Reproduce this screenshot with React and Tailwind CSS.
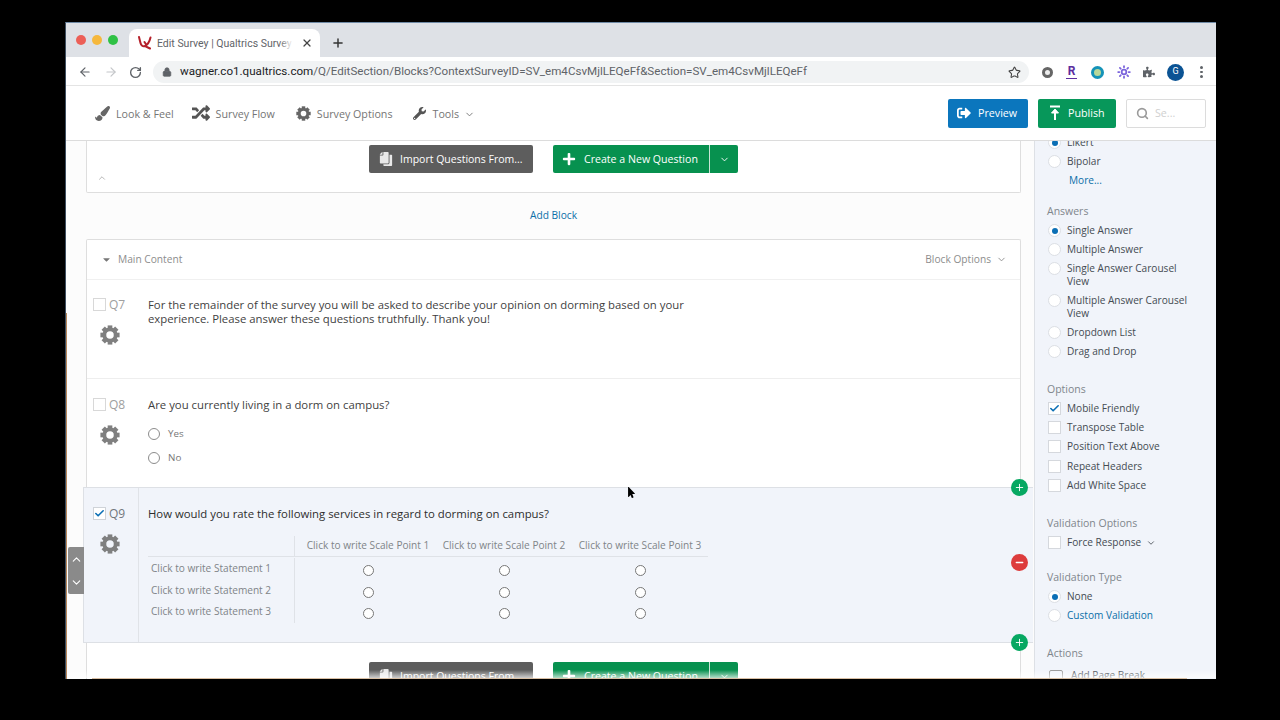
import React from 'react';
import { ArrowLeft, ArrowRight, RotateCw, Lock, Star, X, Plus, ChevronDown, ChevronUp, Search, Check, Minus, Sun } from 'lucide-react';
import { FaPaintBrush, FaWrench, FaPuzzlePiece, FaCopy, FaCaretDown, FaSignOutAlt, FaPlus, FaMousePointer, FaRandom } from 'react-icons/fa';

const font = "font-['Open_Sans',sans-serif]";

const CogIcon = ({ size, className }) => (
  <svg width={size} height={size} viewBox="0 0 24 24" className={className}>
    {[0, 45, 90, 135, 180, 225, 270, 315].map((a) => (
      <rect key={a} x="9.2" y="0.5" width="5.6" height="6" fill="currentColor" transform={`rotate(${a} 12 12)`} />
    ))}
    <circle cx="12" cy="12" r="6.8" fill="none" stroke="currentColor" strokeWidth="4.6" />
  </svg>
);

const Radio = ({ on }) => (
  <span className="w-[13px] h-[13px] shrink-0 rounded-full bg-white border border-[#dcdfe4] flex items-center justify-center">
    {on && <span className="w-[6px] h-[6px] rounded-full bg-[#0b6fb5]" />}
  </span>
);

const Box = ({ on }) => (
  <span className="w-[13px] h-[13px] shrink-0 bg-white border border-[#d5d8dd] flex items-center justify-center">
    {on && <Check size={11} strokeWidth={3.5} className="text-[#0b6fb5]" />}
  </span>
);

const Row = ({ children, mark, blue }) => (
  <div className="flex items-start gap-[6px] py-[3px] pl-[1px] leading-[13px]">
    <span className="flex">{mark}</span>
    <span className={`w-[124px] text-[10.1px] ${blue ? 'text-[#0b6fa8]' : 'text-[#444b52]'}`}>{children}</span>
  </div>
);

const Heading = ({ children }) => (
  <div className="h-[19px] leading-[19px] text-[10.5px] text-[#80868c]">{children}</div>
);

const Gear = () => <CogIcon size={20} className="text-[#7f7f7f] mt-[14px] ml-[7px]" />;

const QNum = ({ n, on }) => (
  <div className="flex items-center gap-[3px]">
    <span className={`w-[13px] h-[13px] border flex items-center justify-center ${on ? 'bg-white border-[#cfd3d8]' : 'border-[#d8d8d8]'}`}>
      {on && <Check size={11} strokeWidth={3.5} className="text-[#0b6fb5]" />}
    </span>
    <span className={`text-[12px] leading-[13px] ${on ? 'text-[#72777c]' : 'text-[#a0a0a0]'}`}>{n}</span>
  </div>
);

const ImportAndCreate = () => (
  <div className="flex justify-center gap-[20px]">
    <button className="w-[164px] h-[28px] bg-[#5d5d5d] rounded-[2px] flex items-center pl-[10px] gap-[7px] text-white text-[10.5px]">
      <FaCopy size={14} className="text-[#e8e8e8] -scale-x-100" />
      <span className="mt-[2px]">Import Questions From...</span>
    </button>
    <div className="flex h-[28px] bg-[#07914f] rounded-[2px] text-white">
      <button className="w-[156px] flex items-center pl-[9px] gap-[8px] text-[10.6px]">
        <FaPlus size={14} />
        <span className="mt-[2px]">Create a New Question</span>
      </button>
      <span className="w-[1px] bg-[#c9e6d6]" />
      <button className="w-[28px] flex items-center justify-center">
        <ChevronDown size={11} />
      </button>
    </div>
  </div>
);

const Circle = ({ className, children }) => (
  <span className={`absolute right-[5px] w-[17px] h-[17px] rounded-full flex items-center justify-center text-white z-10 ${className}`}>
    {children}
  </span>
);

const statements = ['Click to write Statement 1', 'Click to write Statement 2', 'Click to write Statement 3'];
const scale = ['Click to write Scale Point 1', 'Click to write Scale Point 2', 'Click to write Scale Point 3'];

export default function App() {
  return (
    <div className={`w-[1280px] h-[720px] bg-black overflow-hidden pt-[22px] pl-[65px] ${font}`}>
      <div className="relative w-[1151px] h-[657px] overflow-hidden flex flex-col bg-white border-t border-[#6f8aa6] border-l border-l-[#3f4f60]">
        {/* tab strip */}
        <div className="h-[34px] shrink-0 bg-[#dee1e6] flex items-end font-['Roboto',sans-serif]">
          <div className="flex gap-[6px] h-[34px] items-center pl-[10px] w-[63px] -mt-[1px] pb-[1px]">
            <span className="w-[10px] h-[10px] rounded-full bg-[#ec5f57]" />
            <span className="w-[10px] h-[10px] rounded-full bg-[#f6b83c]" />
            <span className="w-[10px] h-[10px] rounded-full bg-[#2fc145]" />
          </div>
          <div className="relative w-[191px] h-[28px] bg-white rounded-t-[8px] flex items-center pl-[9px] pr-[7px]">
            <svg width="14" height="14" viewBox="0 0 14 14" fill="none" className="shrink-0">
              <path d="M1 1 L2.5 7 Q3.5 11 7 10 L12 12.5 M7 10 Q11 8 12.5 1.5 M6.5 6 L8.5 9" stroke="#b5202a" strokeWidth="2" strokeLinecap="round" />
            </svg>
            <span className="ml-[5px] mt-[2px] w-[136px] overflow-hidden whitespace-nowrap text-[10.5px] text-[#5f6368]">Edit Survey | Qualtrics Survey S</span>
            <span className="absolute left-[150px] top-0 w-[14px] h-[28px] bg-gradient-to-r from-white/0 to-white" />
            <X size={12} strokeWidth={2.5} className="ml-auto text-[#444]" />
          </div>
          <div className="h-[28px] flex items-center ml-[11px]">
            <Plus size={14} strokeWidth={2.5} className="text-[#333]" />
          </div>
        </div>

        {/* toolbar */}
        <div className="h-[29px] shrink-0 bg-white flex items-center pt-[2px] border-b border-[#e4e4e4] font-['Roboto',sans-serif]">
          <ArrowLeft size={14} className="ml-[12px] text-[#5f6368]" />
          <ArrowRight size={14} className="ml-[12px] text-[#c4c6c9]" />
          <RotateCw size={13} strokeWidth={2.5} className="ml-[11px] text-[#5f6368]" />
          <div className="ml-[11px] w-[876px] h-[22px] rounded-full bg-[#f1f3f4] flex items-center pl-[9px] pr-[8px]">
            <Lock size={10} fill="#5f6368" className="text-[#5f6368]" />
            <span className="ml-[8px] text-[11.6px] text-[#202124]">wagner.co1.qualtrics.com</span>
            <span className="text-[11.6px] text-[#5f6368]">/Q/EditSection/Blocks?ContextSurveyID=SV_em4CsvMjlLEQeFf&Section=SV_em4CsvMjlLEQeFf</span>
            <Star size={13} className="ml-auto text-[#444]" />
          </div>
          <span className="ml-[13px] w-[11px] h-[11px] rounded-full border-[3px] border-[#666] bg-[#eee]" />
          <span className="ml-[13px] w-[11px] text-[12px] font-bold leading-[13px] text-[#5b2d9e] border-b border-[#5b2d9e] text-center">R</span>
          <span className="ml-[14px] w-[13px] h-[13px] rounded-full border-[3px] border-[#1593b8] bg-[#b8d89a]" />
          <Sun size={14} strokeWidth={3} className="ml-[13px] text-[#7a63dc]" />
          <FaPuzzlePiece size={12} className="ml-[12px] text-[#5f6368]" />
          <span className="ml-[12px] w-[17px] h-[17px] rounded-full bg-[#0b5394] text-white text-[9px] flex items-center justify-center">G</span>
          <span className="ml-[16px] flex flex-col gap-[2px]">
            <span className="w-[2.5px] h-[2.5px] rounded-full bg-[#5f6368]" />
            <span className="w-[2.5px] h-[2.5px] rounded-full bg-[#5f6368]" />
            <span className="w-[2.5px] h-[2.5px] rounded-full bg-[#5f6368]" />
          </span>
        </div>

        {/* app header */}
        <div className="h-[55px] shrink-0 bg-white border-b border-[#dcdcdc] flex items-center text-[10.7px] text-[#757575]">
          <FaPaintBrush size={15} className="ml-[29px] text-[#666]" />
          <span className="ml-[6px] mt-[2px]">Look &amp; Feel</span>
          <FaRandom size={18} className="ml-[18px] text-[#555]" />
          <span className="ml-[6px] mt-[2px]">Survey Flow</span>
          <CogIcon size={15} className="ml-[21px] text-[#666]" />
          <span className="ml-[6px] mt-[2px]">Survey Options</span>
          <FaWrench size={13} className="ml-[20px] text-[#555]" />
          <span className="ml-[7px] mt-[2px]">Tools</span>
          <ChevronDown size={11} className="ml-[5px] mt-[2px]" />
          <button className="ml-auto w-[80px] h-[29px] bg-[#0b76bd] rounded-[2px] text-white flex items-center pl-[9px] gap-[7px]">
            <FaSignOutAlt size={14} />
            Preview
          </button>
          <button className="ml-[10px] w-[78px] h-[29px] bg-[#07975a] rounded-[2px] text-white flex items-center pl-[11px] gap-[7px]">
            <svg width="12" height="16" viewBox="0 0 12 16" fill="none" stroke="white" strokeWidth="2">
              <path d="M1 1.5 H11 M6 15 V5" />
              <path d="M2.5 8 L6 4 L9.5 8 Z" fill="white" strokeWidth="1" />
            </svg>
            Publish
          </button>
          <div className="ml-[10px] mr-[10px] w-[80px] h-[29px] border border-[#dcdcdc] rounded-[2px] flex items-center pl-[9px] gap-[6px]">
            <Search size={13} strokeWidth={3} className="text-[#9a9a9a]" />
            <span className="text-[#d0d0d0]">Se...</span>
          </div>
        </div>

        <div className="flex-1 flex min-h-0">
          {/* survey canvas */}
          <div className="w-[968px] shrink-0 bg-[#fcfcfc] pl-[20px] overflow-hidden">
            <div className="w-[935px]">
              <div className="h-[52px] bg-white border border-t-0 border-[#dedede] rounded-b-[2px] pt-[4px]">
                <ImportAndCreate />
                <ChevronUp size={10} className="ml-[10px] text-[#aaa]" />
              </div>
              <div className="h-[46px] flex items-center justify-center text-[10.2px] text-[#0b6fa8]">Add Block</div>

              <div className="bg-white border border-[#dedede] border-b-0 rounded-t-[2px]">
                <div className="h-[40px] border-b border-[#f0f0f0] flex items-center text-[10.2px] text-[#8d8d8d] pl-[14px] pr-[13px]">
                  <FaCaretDown size={11} className="text-[#777]" />
                  <span className="ml-[6px]">Main Content</span>
                  <span className="ml-auto">Block Options</span>
                  <ChevronDown size={11} className="ml-[5px]" />
                </div>

                <div className="h-[99px] border-b border-[#eeeeee] flex pl-[6px] pt-[18px]">
                  <div className="w-[55px] shrink-0">
                    <QNum n="Q7" />
                    <Gear />
                  </div>
                  <p className="w-[540px] text-[11.35px] leading-[14px] text-[#3f3f3f]">
                    For the remainder of the survey you will be asked to describe your opinion on dorming based on your experience. Please answer these questions truthfully. Thank you!
                  </p>
                </div>

                <div className="h-[108px] flex pl-[6px] pt-[19px]">
                  <div className="w-[55px] shrink-0">
                    <QNum n="Q8" />
                    <Gear />
                  </div>
                  <div>
                    <p className="text-[11.35px] leading-[14px] text-[#3f3f3f]">Are you currently living in a dorm on campus?</p>
                    <div className="mt-[16px] flex flex-col gap-[12px] text-[9.8px] text-[#777] leading-[12px]">
                      <div className="flex items-center gap-[8px]">
                        <span className="w-[12px] h-[12px] rounded-full border border-[#8c8c8c]" />
                        Yes
                      </div>
                      <div className="flex items-center gap-[8px]">
                        <span className="w-[12px] h-[12px] rounded-full border border-[#8c8c8c]" />
                        No
                      </div>
                    </div>
                  </div>
                </div>

                {/* selected question */}
                <div className="relative h-[156px] -ml-[4px] -mr-[13px] bg-[#f1f4fa] border-y border-l border-[#dde0e5] flex">
                  <Circle className="-top-[9px] bg-[#07a862]"><Plus size={11} /></Circle>
                  <Circle className="top-[66px] bg-[#dd3c3c]"><Minus size={11} strokeWidth={3} /></Circle>
                  <Circle className="-bottom-[9px] bg-[#07a862]"><Plus size={11} /></Circle>
                  <div className="absolute -left-[16px] top-[59px] w-[16px] h-[47px] bg-[#8a8a8a] rounded-l-[2px] flex flex-col items-center justify-center gap-[10px] text-white">
                    <ChevronUp size={13} />
                    <ChevronDown size={13} />
                  </div>
                  <div className="w-[55px] shrink-0 border-r border-[#e0e3e8] pl-[9px] pt-[19px]">
                    <QNum n="Q9" on />
                    <Gear />
                  </div>
                  <div className="pl-[9px] pt-[19px]">
                    <p className="text-[11.35px] leading-[14px] text-[#2d2d2d]">How would you rate the following services in regard to dorming on campus?</p>
                    <div className="mt-[15px] w-[560px] text-[10.1px] text-[#808488]">
                      <div className="flex h-[21px] border-b border-[#dfe2e7]">
                        <div className="w-[147px] border-r border-[#dfe2e7]" />
                        <div className="pl-[5px] grid grid-cols-[136px_136px_136px] items-center text-center">
                          {scale.map((s) => <span key={s}>{s}</span>)}
                        </div>
                      </div>
                      <div className="mt-[1px]">
                        {statements.map((s) => (
                          <div key={s} className="flex h-[21.7px]">
                            <div className="w-[147px] border-r border-[#dfe2e7] pl-[3px] leading-[21px]">{s}</div>
                            <div className="pl-[5px] grid grid-cols-[136px_136px_136px] items-center justify-items-center pt-[3px]">
                              {scale.map((c) => <span key={c} className="w-[11px] h-[11px] rounded-full bg-white border border-[#777]" />)}
                            </div>
                          </div>
                        ))}
                      </div>
                    </div>
                  </div>
                </div>

                <div className="pt-[19px] h-[60px]">
                  <ImportAndCreate />
                </div>
              </div>
            </div>
          </div>

          {/* question options panel */}
          <div className="flex-1 bg-[#f1f4fa] border-l border-[#dde0e5] pl-[12px] overflow-hidden">
            <div className="-mt-[8px]">
              <Row mark={<Radio on />}>Likert</Row>
              <Row mark={<Radio />}>Bipolar</Row>
              <div className="h-[19px] leading-[19px] pl-[22px] text-[10.1px] text-[#0b6fa8] mb-[12px]">More...</div>

              <Heading>Answers</Heading>
              <Row mark={<Radio on />}>Single Answer</Row>
              <Row mark={<Radio />}>Multiple Answer</Row>
              <Row mark={<Radio />}>Single Answer Carousel View</Row>
              <Row mark={<Radio />}>Multiple Answer Carousel View</Row>
              <Row mark={<Radio />}>Dropdown List</Row>
              <Row mark={<Radio />}>Drag and Drop</Row>
              <div className="h-[19px]" />

              <Heading>Options</Heading>
              <Row mark={<Box on />}>Mobile Friendly</Row>
              <Row mark={<Box />}>Transpose Table</Row>
              <Row mark={<Box />}>Position Text Above</Row>
              <div className="h-[1px]" />
              <Row mark={<Box />}>Repeat Headers</Row>
              <Row mark={<Box />}>Add White Space</Row>
              <div className="h-[19px]" />

              <Heading>Validation Options</Heading>
              <div className="flex items-start gap-[6px] py-[3px] pl-[1px] leading-[13px] mb-[16px] text-[10.1px] text-[#444b52]">
                <Box />
                Force Response
                <ChevronDown size={10} className="mt-[2px] -ml-[1px]" />
              </div>

              <Heading>Validation Type</Heading>
              <Row mark={<Radio on />}>None</Row>
              <Row mark={<Radio />} blue>Custom Validation</Row>
              <div className="h-[19px]" />

              <Heading>Actions</Heading>
              <div className="flex items-center gap-[8px] pl-[2px] pt-[5px] text-[10.1px] text-[#444b52]">
                <span className="w-[14px] h-[12px] border border-[#999] rounded-[2px]" />
                Add Page Break
              </div>
            </div>
          </div>
        </div>

        {/* bottom edge of the recording + cursor */}
        <div className="absolute bottom-[1px] left-0 w-full h-[8px] bg-gradient-to-b from-white/0 to-white/70" />
        <div className="absolute bottom-0 left-[26px] w-[1095px] h-[1.5px] bg-[#d9bfa4]" />
        <div className="absolute left-0 top-[290px] bottom-0 w-[1px] bg-[#b8875a]" />
        <FaMousePointer size={11} className="absolute left-[560px] top-[464px] text-black" />
      </div>
    </div>
  );
}
